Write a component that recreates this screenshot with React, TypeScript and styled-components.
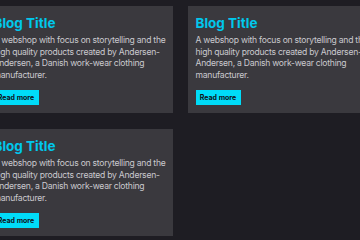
import React from "react";
import styled, { createGlobalStyle } from "styled-components";

const Global = createGlobalStyle`
  html, body { margin: 0; padding: 0; background: #1e1d23; }
  body { width: 360px; height: 240px; overflow: hidden; font-family: Inter, "Liberation Sans", sans-serif; }
`;

const Grid = styled.div`
  display: grid;
  grid-template-columns: repeat(2, 187px);
  justify-content: center;
  column-gap: 15px;
  row-gap: 16px;
  padding-top: 6px;
  width: 360px;
`;

const Card = styled.article`
  background: #3a393e;
  padding: 7px 6px 8px 8px;
  display: flex;
  flex-direction: column;
  align-items: flex-start;
`;

const Title = styled.h2`
  margin: 0;
  font-size: 13.5px;
  line-height: 20px;
  font-weight: 700;
  color: #00c8ec;
`;

const Body = styled.p`
  margin: 2px 0 0;
  font-size: 8.6px;
  letter-spacing: -0.25px;
  line-height: 11.7px;
  color: #cac9ce;
`;

const Button = styled.button`
  margin-top: 8px;
  height: 15px;
  width: 45px;
  padding: 0;
  border: none;
  background: #00dcf8;
  color: #101018;
  font-family: Inter, "Liberation Sans", sans-serif;
  font-size: 7px;
  font-weight: 700;
`;

const posts = [0, 1, 2];

export default function App() {
  return (
    <>
      <Global />
      <Grid>
        {posts.map((i) => (
          <Card key={i}>
            <Title>Blog Title</Title>
            <Body>
              A webshop with focus on storytelling and the high quality products created by Andersen-Andersen, a Danish work-wear clothing manufacturer.
            </Body>
            <Button>Read more</Button>
          </Card>
        ))}
      </Grid>
    </>
  );
}
